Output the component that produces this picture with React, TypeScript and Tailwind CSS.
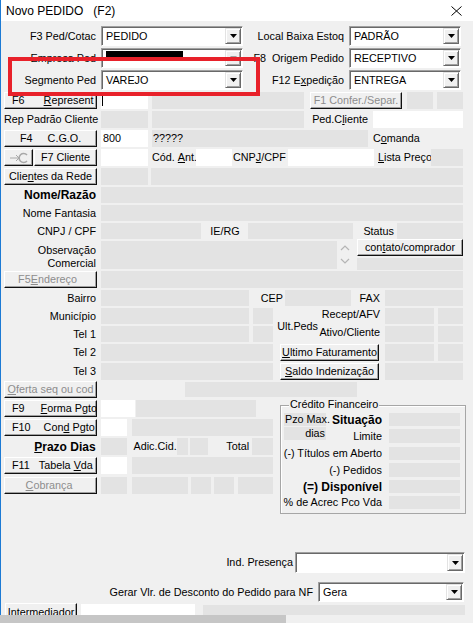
import type { ReactNode } from "react";

// --- small building blocks of the classic Win32 form ---

type Box = { className?: string; children?: ReactNode };

const Gray = ({ className = "", children }: Box) => (
  <div className={`flex items-center whitespace-nowrap bg-[#e3e3e3] ${className}`}>{children}</div>
);

const White = ({ className = "", children }: Box) => (
  <div className={`flex items-center bg-white ${className}`}>{children}</div>
);

const Lbl = ({ className = "", children }: Box) => (
  <div className={`flex items-center whitespace-pre leading-none ${className}`}>{children}</div>
);

const U = ({ children }: Box) => <u className="underline underline-offset-[1px]">{children}</u>;

const Btn = ({
  className = "",
  disabled = false,
  children,
}: Box & { disabled?: boolean }) => (
  <div
    className={`flex items-center whitespace-pre leading-none bg-[#f0f0f0] border border-t-white border-l-white border-r-[#101010] border-b-[#101010] shadow-[inset_-1px_-1px_0_#a0a0a0] ${
      disabled ? "text-[#8d8d8d]" : "text-black"
    } ${className}`}
  >
    {children}
  </div>
);

const Arrow = ({ disabled = false }: { disabled?: boolean }) => (
  <svg width="7" height="4" viewBox="0 0 7 4">
    <polygon points="0,0 7,0 3.5,4" fill={disabled ? "#a0a0a0" : "#000"} />
  </svg>
);

const Combo = ({
  className = "",
  disabled = false,
  children,
}: Box & { disabled?: boolean }) => (
  <div
    className={`flex bg-white border border-t-[#a0a0a0] border-l-[#a0a0a0] border-r-white border-b-white shadow-[inset_1px_1px_0_#696969] ${className}`}
  >
    <div className="flex flex-1 items-center pl-[4px] pt-[1px] leading-none">{children}</div>
    <div className="my-[1px] mr-[1px] flex w-[16px] items-center justify-center bg-[#f0f0f0] border border-t-[#e3e3e3] border-l-[#e3e3e3] border-r-[#696969] border-b-[#696969] shadow-[inset_1px_1px_0_#fff,inset_-1px_-1px_0_#a0a0a0]">
      <Arrow disabled={disabled} />
    </div>
  </div>
);

// right aligned caption in the left column (x 1..97)
const Cap = ({ className = "", children }: Box) => (
  <Lbl className={`w-[96px] justify-end pr-[1px] ${className}`}>{children}</Lbl>
);

const Chevron = ({ up }: { up?: boolean }) => (
  <svg width="10" height="6" viewBox="0 0 10 6">
    <polyline
      points={up ? "1,5 5,1 9,5" : "1,1 5,5 9,1"}
      fill="none"
      stroke="#b5b5b5"
      strokeWidth="1.2"
    />
  </svg>
);

const LinkIcon = () => (
  <svg width="20" height="12" viewBox="0 0 20 12">
    <line x1="1" y1="6" x2="10" y2="6" stroke="#a8a8a8" strokeWidth="1" />
    <polyline points="7,3 10,6 7,9" fill="none" stroke="#a8a8a8" strokeWidth="1" />
    <path d="M18 3 A4.5 4.5 0 1 0 18 9" fill="none" stroke="#a8a8a8" strokeWidth="1.6" />
  </svg>
);

// --- credit panel on the lower right ---

const CreditRow = ({ label, bold, className = "" }: { label: string; bold?: boolean; className?: string }) => (
  <div className={`flex ${className}`}>
    <Lbl className={`w-[102px] justify-end pr-[1px] ${bold ? "text-[12px] font-bold" : ""}`}>{label}</Lbl>
    <Gray className="ml-[6px] w-[71px]" />
  </div>
);

const CreditPanel = () => (
  <div className="relative ml-[7px] mt-[5px] flex h-[109px] w-[186px] flex-col border border-[#a6a6a6] shadow-[inset_1px_1px_0_#fff]">
    <div className="absolute -top-[7px] left-[8px] bg-[#f0f0f0] px-[1px] leading-none">Crédito Financeiro</div>
    <div className="mt-[7px] flex h-[13px]">
      <Gray className="ml-[3px] w-[42px] pl-[1px] leading-none">Pzo Max.</Gray>
      <Lbl className="w-[57px] justify-end pr-[1px] text-[12px] font-bold">Situação</Lbl>
      <Gray className="ml-[6px] w-[71px]" />
    </div>
    <div className="mt-[3px] flex h-[14px]">
      <Gray className="-mt-[2px] ml-[3px] h-[13px] w-[42px] justify-end pr-[1px] leading-none">dias</Gray>
      <Lbl className="w-[57px] justify-end pr-[1px]">Limite</Lbl>
      <Gray className="ml-[6px] w-[71px]" />
    </div>
    <CreditRow className="mt-[4px] h-[13px]" label="(-) Títulos em Aberto" />
    <CreditRow className="mt-[3px] h-[14px]" label="(-) Pedidos" />
    <CreditRow className="mt-[3px] h-[13px]" label="(=) Disponível" bold />
    <CreditRow className="mt-[3px] h-[13px]" label="% de Acrec Pco Vda" />
  </div>
);

export default function NovoPedido() {
  return (
    <div className="flex h-[623px] w-[473px] flex-col overflow-hidden bg-[#f0f0f0] font-['Liberation_Sans',Arial,sans-serif] text-[10.8px] text-black">
      <div className="relative flex h-[615px] flex-col overflow-hidden border-l border-[#1c7ad4]">
        {/* title bar */}
        <div className="flex h-[21px] items-center justify-between bg-white pl-[5px] pr-[11px]">
          <span className="whitespace-pre text-[12px] leading-none">Novo PEDIDO   (F2)</span>
          <svg width="11" height="10" viewBox="0 0 11 10">
            <line x1="0.5" y1="0.5" x2="10.5" y2="9.5" stroke="#000" strokeWidth="1" />
            <line x1="10.5" y1="0.5" x2="0.5" y2="9.5" stroke="#000" strokeWidth="1" />
          </svg>
        </div>

        {/* header combos */}
        <div className="mt-[5px] flex h-[20px]">
          <Cap>F3 Ped/Cotac</Cap>
          <Combo className="ml-[4px] w-[142px]">PEDIDO</Combo>
          <Lbl className="w-[103px] justify-end pr-[2px]">Local Baixa Estoq</Lbl>
          <Combo className="ml-[3px] w-[112px]">PADRÃO</Combo>
        </div>
        <div className="mt-[2px] flex h-[20px]">
          <Cap>Empresa Ped</Cap>
          <Combo className="ml-[4px] w-[142px]" disabled>
            <div className="-mt-[8px] h-[8px] w-[77px] bg-black" />
          </Combo>
          <Lbl className="w-[103px] justify-end pr-[2px]">F8  Origem Pedido</Lbl>
          <Combo className="ml-[3px] w-[112px]">RECEPTIVO</Combo>
        </div>
        <div className="mt-[2px] flex h-[20px]">
          <Cap>Segmento Ped</Cap>
          <Combo className="ml-[4px] w-[142px]">VAREJO</Combo>
          <Lbl className="w-[103px] justify-end pr-[2px]">
            F12 E<U>x</U>pedição
          </Lbl>
          <Combo className="ml-[3px] w-[112px]">ENTREGA</Combo>
        </div>

        {/* representative / client block */}
        <div className="mt-[2px] flex h-[17px]">
          <Btn className="ml-[3px] w-[93px] pl-[7px]">
            F6<span className="ml-[19px]"><U>R</U>epresent</span>
          </Btn>
          <White className="ml-[4px] w-[47px] pl-[1px]">
            <div className="h-[11px] w-px bg-black" />
          </White>
          <Gray className="ml-[4px] w-[152px]" />
          <Btn className="ml-[6px] w-[92px] justify-center" disabled>
            F1 Confer./Separ.
          </Btn>
          <Gray className="ml-[5px] w-[26px]" />
          <Gray className="ml-[4px] w-[26px]" />
        </div>
        <div className="mt-[2px] flex h-[17px]">
          <Lbl className="w-[96px] pl-[3px]">Rep Padrão Cliente</Lbl>
          <Gray className="ml-[4px] w-[47px]" />
          <Gray className="ml-[4px] w-[152px]" />
          <Lbl className="w-[69px] justify-end pr-[5px]">
            Ped.C<U>l</U>iente
          </Lbl>
          <White className="w-[90px]" />
        </div>
        <div className="mt-[2px] flex h-[17px]">
          <Btn className="ml-[3px] w-[93px] pl-[15px]">
            F4<span className="ml-[15px]">C.G.O.</span>
          </Btn>
          <White className="ml-[4px] w-[47px] pl-[2px] leading-none">800</White>
          <Gray className="ml-[4px] w-[216px] pl-[1px] leading-none">?????</Gray>
          <Lbl className="ml-[5px]">
            C<U>o</U>manda
          </Lbl>
        </div>
        <div className="mt-[2px] flex h-[17px]">
          <Btn className="ml-[3px] w-[29px] justify-center" disabled>
            <LinkIcon />
          </Btn>
          <Btn className="ml-[1px] w-[63px] justify-center">F7 Cliente</Btn>
          <White className="ml-[4px] w-[47px]" />
          <Lbl className="ml-[4px] w-[44px]">
            Cód. <U>A</U>nt.
          </Lbl>
          <White className="w-[36px]" />
          <Lbl className="w-[56px] pl-[1px]">
            CNP<U>J</U>/CPF
          </Lbl>
          <White className="w-[86px]" />
          <Lbl className="ml-[4px] w-[53px]">
            <U>L</U>ista Preço
          </Lbl>
          <Gray className="w-[32px]" />
        </div>
        <div className="mt-[2px] flex h-[17px]">
          <Btn className="ml-[3px] w-[93px] justify-center">
            Clie<U>n</U>tes da Rede
          </Btn>
          <Gray className="ml-[4px] w-[47px]" />
          <Gray className="ml-[3px] w-[312px]" />
        </div>

        {/* client details */}
        <div className="mt-[2px] flex h-[16px]">
          <Cap className="text-[12px] font-bold">Nome/Razão</Cap>
          <Gray className="ml-[4px] w-[362px]" />
        </div>
        <div className="mt-[2px] flex h-[16px]">
          <Cap>Nome Fantasia</Cap>
          <Gray className="ml-[4px] w-[362px]" />
        </div>
        <div className="mt-[2px] flex h-[16px]">
          <Cap>CNPJ / CPF</Cap>
          <Gray className="ml-[4px] w-[100px]" />
          <Lbl className="w-[47px] justify-center pl-[1px]">IE/RG</Lbl>
          <Gray className="w-[105px]" />
          <Lbl className="w-[44px] justify-end pr-[3px]">Status</Lbl>
          <Gray className="w-[66px]" />
        </div>
        <div className="mt-[1px] flex h-[30px]">
          <div className="flex w-[96px] flex-col items-end pr-[1px] pt-[2px] leading-[16px]">
            <span>Observação</span>
            <span className="-mt-[3px]">Comercial</span>
          </div>
          <Gray className="ml-[4px] mt-[1px] h-[28px] w-[236px]" />
          <div className="flex w-[20px] flex-col items-center pt-[5px] pr-[4px]">
            <Chevron up />
            <div className="h-[7px]" />
            <Chevron />
          </div>
          <div className="flex w-[106px] flex-col">
            <Btn className="-mt-[1px] h-[17px] justify-center">
              con<U>t</U>ato/comprador
            </Btn>
            <Gray className="mt-[2px] h-[12px]" />
          </div>
        </div>
        <div className="mt-[1px] flex h-[17px]">
          <Btn className="ml-[3px] w-[93px] justify-center pr-[6px]" disabled>
            F5<U>E</U>ndereço
          </Btn>
          <Gray className="ml-[4px] w-[362px]" />
        </div>

        {/* address and phones */}
        <div className="mt-[2px] flex h-[16px]">
          <Cap>Bairro</Cap>
          <Gray className="ml-[4px] w-[148px]" />
          <Lbl className="w-[36px] justify-end pr-[2px]">CEP</Lbl>
          <Gray className="w-[66px]" />
          <Lbl className="w-[34px] justify-end pr-[5px]">FAX</Lbl>
          <Gray className="w-[78px]" />
        </div>
        <div className="mt-[2px] flex h-[34px]">
          <div className="flex flex-col gap-[2px]">
            <div className="flex h-[16px]">
              <Cap>Município</Cap>
              <Gray className="ml-[4px] w-[148px]" />
              <Gray className="ml-[4px] w-[20px]" />
            </div>
            <div className="flex h-[16px]">
              <Cap>Tel 1</Cap>
              <Gray className="ml-[4px] w-[148px]" />
              <Gray className="ml-[4px] w-[20px]" />
            </div>
          </div>
          <Lbl className="w-[46px] justify-end pr-[1px] pt-[2px]">Ult.Peds</Lbl>
          <div className="flex w-[66px] flex-col items-end pr-[5px] leading-none">
            <span className="mt-[1px]">Recept/AFV</span>
            <span className="mt-[7px]">Ativo/Cliente</span>
          </div>
          <div className="flex flex-col gap-[2px]">
            <div className="flex h-[16px]">
              <Gray className="w-[49px]" />
              <Gray className="ml-[4px] w-[25px]" />
            </div>
            <div className="flex h-[16px]">
              <Gray className="w-[49px]" />
              <Gray className="ml-[4px] w-[25px]" />
            </div>
          </div>
        </div>
        <div className="mt-[2px] flex h-[17px]">
          <Cap>Tel 2</Cap>
          <Gray className="ml-[4px] w-[172px]" />
          <Btn className="ml-[7px] w-[99px] justify-center">
            <U>U</U>ltimo Faturamento
          </Btn>
          <Gray className="ml-[6px] w-[49px]" />
          <Gray className="ml-[4px] w-[25px]" />
        </div>
        <div className="mt-[2px] flex h-[17px]">
          <Cap>Tel 3</Cap>
          <Gray className="ml-[4px] w-[172px]" />
          <Btn className="ml-[7px] w-[99px] justify-center">
            <U>S</U>aldo Indenização
          </Btn>
          <Gray className="ml-[6px] w-[78px]" />
        </div>
        <div className="mt-[1px] flex h-[17px] items-center">
          <Btn className="ml-[3px] h-[17px] w-[93px] justify-center" disabled>
            <U>O</U>ferta seq ou cod
          </Btn>
          <Gray className="ml-[88px] h-[15px] w-[172px]" />
        </div>

        {/* payment block with credit panel */}
        <div className="mt-[2px] flex h-[114px]">
          <div className="flex w-[272px] flex-col">
            <div className="flex h-[17px]">
              <Btn className="ml-[3px] w-[93px] pl-[7px]">
                F9<span className="ml-[16px]"><U>F</U>orma Pgto</span>
              </Btn>
              <White className="ml-[4px] w-[34px]" />
              <Gray className="ml-[1px] w-[120px]" />
            </div>
            <div className="mt-[2px] flex h-[17px]">
              <Btn className="ml-[3px] w-[93px] pl-[7px]">
                F10<span className="ml-[13px]">Con<U>d</U> Pgto</span>
              </Btn>
              <White className="ml-[4px] w-[26px]" />
              <Gray className="ml-[5px] w-[141px]" />
            </div>
            <div className="mt-[2px] flex h-[17px]">
              <Cap className="text-[12px] font-bold">
                <U>P</U>razo Dias
              </Cap>
              <Gray className="ml-[4px] w-[26px]" />
              <Lbl className="ml-[7px] w-[44px]">Adic.Cid.</Lbl>
              <Gray className="w-[11px]" />
              <Gray className="ml-[2px] w-[18px]" />
              <Lbl className="w-[44px] justify-end pr-[3px]">Total</Lbl>
              <Gray className="w-[21px]" />
            </div>
            <div className="mt-[2px] flex h-[17px]">
              <Btn className="ml-[3px] w-[93px] pl-[7px]">
                F11<span className="ml-[9px]">Tabela <U>V</U>da</span>
              </Btn>
              <White className="ml-[4px] w-[26px]" />
              <Gray className="ml-[5px] w-[141px]" />
            </div>
            <div className="mt-[3px] flex h-[17px]">
              <Btn className="ml-[3px] w-[93px] justify-center pr-[3px]" disabled>
                <U>C</U>obrança
              </Btn>
              <Gray className="ml-[4px] w-[26px]" />
              <Gray className="ml-[5px] w-[56px]" />
              <Gray className="ml-[3px] w-[20px]" />
              <Gray className="ml-[3px] w-[20px]" />
              <Gray className="ml-[4px] w-[35px]" />
            </div>
          </div>
          <CreditPanel />
        </div>

        {/* footer */}
        <div className="mt-[38px] flex h-[21px] justify-end pr-[8px]">
          <Lbl className="mr-[2px]">Ind. Presença</Lbl>
          <Combo className="w-[170px]" />
        </div>
        <div className="mt-[9px] flex h-[20px] justify-end pr-[9px]">
          <Lbl className="mr-[5px]">Gerar Vlr. de Desconto do Pedido para NF</Lbl>
          <Combo className="w-[146px]">Gera</Combo>
        </div>
        <div className="mt-[1px] flex h-[12px] items-start overflow-hidden">
          <Btn className="ml-[4px] h-[17px] w-[72px] justify-center pt-[2px]">Intermediador</Btn>
          <White className="ml-[4px] mt-[1px] h-[12px] w-[114px]" />
          <Gray className="ml-[8px] mt-[2px] h-[12px] w-[262px]" />
        </div>

        {/* highlight frame round the segment selector */}
        <div className="absolute left-[7px] top-[57px] h-[39px] w-[252px] border-[4px] border-[#e8212a]" />
      </div>
      <div className="flex h-[8px]">
        <div className="w-[286px] bg-[#c6c6c6]" />
        <div className="flex-1 bg-[#f0f0f0]" />
      </div>
    </div>
  );
}
